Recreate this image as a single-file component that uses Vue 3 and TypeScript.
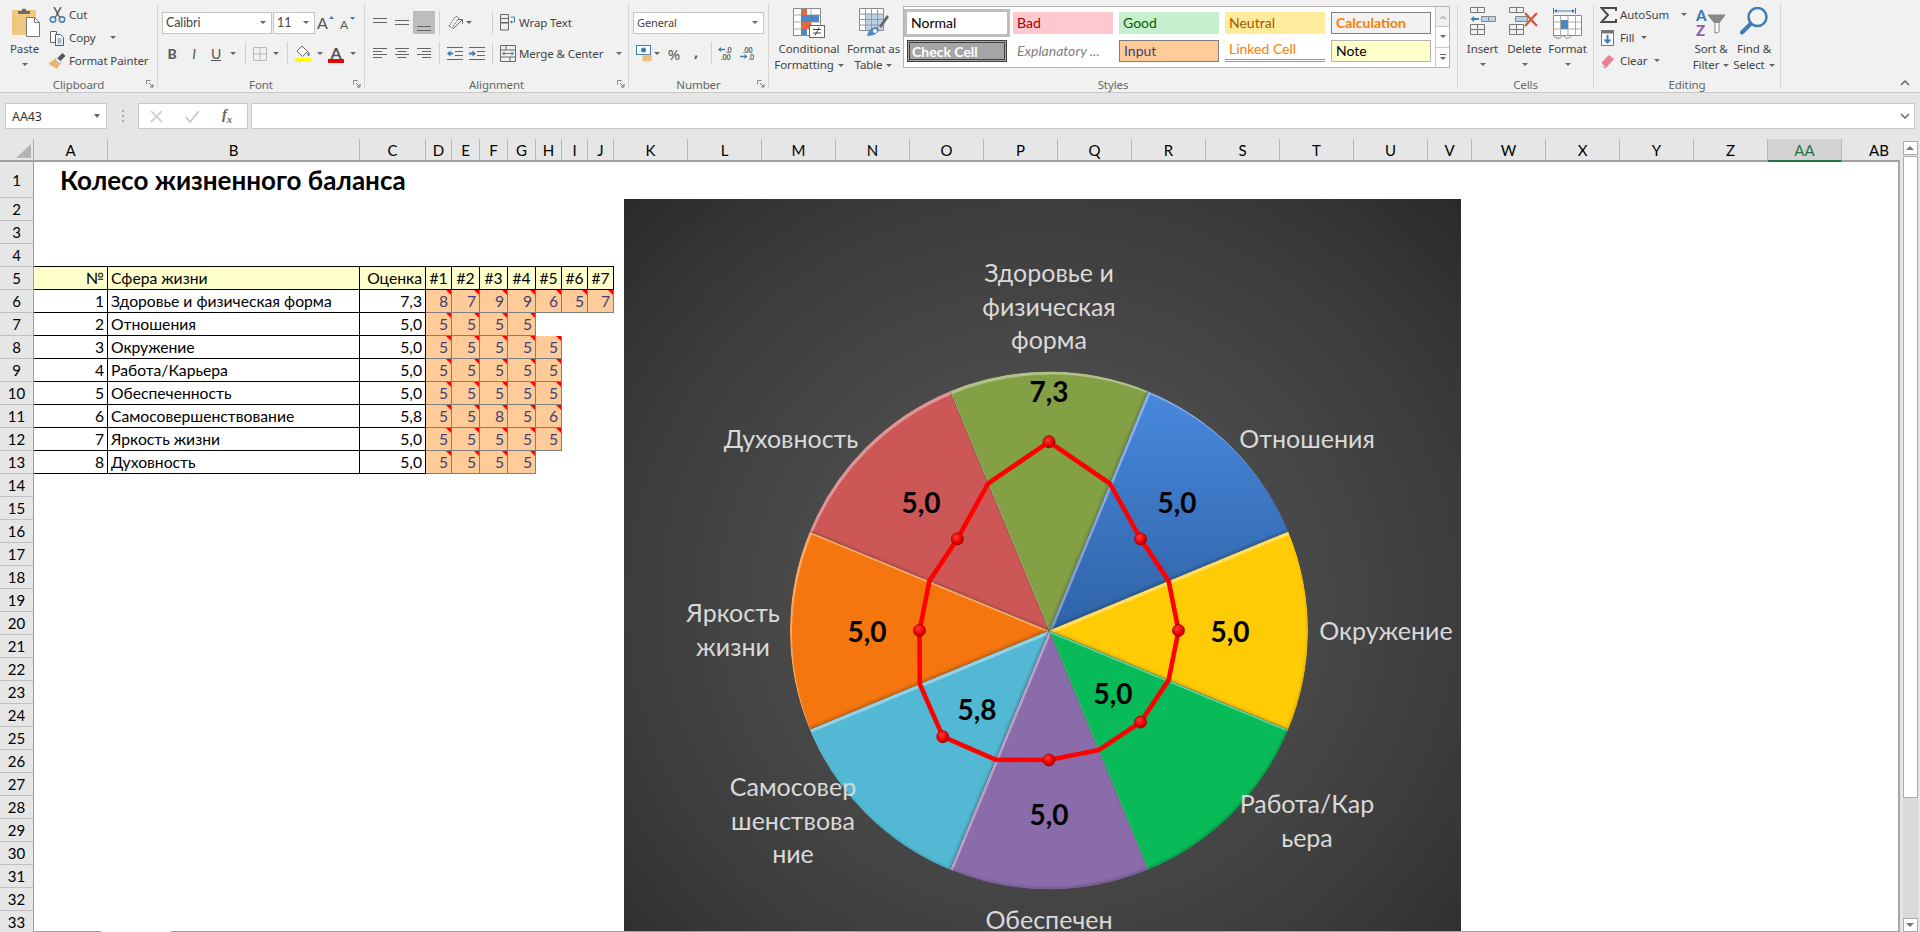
<script setup lang="ts">
interface Col { name: string; w: number }
const colWidths: [string, number][] = [
  ['A', 74], ['B', 252], ['C', 66], ['D', 26], ['E', 28], ['F', 28], ['G', 28], ['H', 26], ['I', 26], ['J', 26],
  ['K', 74], ['L', 74], ['M', 74], ['N', 74], ['O', 74], ['P', 74], ['Q', 74], ['R', 74], ['S', 74], ['T', 74], ['U', 74],
  ['V', 44], ['W', 74], ['X', 74], ['Y', 74], ['Z', 74], ['AA', 74], ['AB', 74],
]
const cols: Col[] = colWidths.map(([name, w]) => ({ name, w }))
const scoreCols = cols.slice(3, 10)
const rowNums = Array.from({ length: 33 }, (_, i) => i + 1)

interface Sphere { name: string; scores: number[]; color: string; lines: string[]; lx: number; ly: number; vx: number; vy: number }
const spheres: Sphere[] = [
  { name: 'Здоровье и физическая форма', scores: [8, 7, 9, 9, 6, 5, 7], color: '#84a044', lines: ['Здоровье и', 'физическая', 'форма'], lx: 425, ly: 73, vx: 425, vy: 192 },
  { name: 'Отношения', scores: [5, 5, 5, 5], color: 'url(#blueFill)', lines: ['Отношения'], lx: 683, ly: 239, vx: 553, vy: 303 },
  { name: 'Окружение', scores: [5, 5, 5, 5, 5], color: '#ffcb05', lines: ['Окружение'], lx: 762, ly: 431, vx: 606, vy: 432 },
  { name: 'Работа/Карьера', scores: [5, 5, 5, 5, 5], color: '#08bb58', lines: ['Работа/Кар', 'ьера'], lx: 683, ly: 604, vx: 489, vy: 494 },
  { name: 'Обеспеченность', scores: [5, 5, 5, 5, 5], color: '#8a6cab', lines: ['Обеспечен'], lx: 425, ly: 720, vx: 425, vy: 615 },
  { name: 'Самосовершенствование', scores: [5, 5, 8, 5, 6], color: '#52b8d3', lines: ['Самосовер', 'шенствова', 'ние'], lx: 169, ly: 587, vx: 353, vy: 510 },
  { name: 'Яркость жизни', scores: [5, 5, 5, 5, 5], color: '#f5760f', lines: ['Яркость', 'жизни'], lx: 109, ly: 413, vx: 243, vy: 432 },
  { name: 'Духовность', scores: [5, 5, 5, 5], color: '#cd5757', lines: ['Духовность'], lx: 167, ly: 239, vx: 297, vy: 303 },
]
const avg = (a: number[]): number => a.reduce((s, v) => s + v, 0) / a.length
const fmt = (v: number): string => v.toFixed(1).replace('.', ',')

const CX = 425
const CY = 431.5
const R = 259
const pt = (deg: number, r: number): [number, number] => {
  const a = ((deg - 90) * Math.PI) / 180
  return [CX + r * Math.cos(a), CY + r * Math.sin(a)]
}
const sectors = spheres.map((s, i) => {
  const [x1, y1] = pt(i * 45 - 22.5, R)
  const [x2, y2] = pt(i * 45 + 22.5, R)
  return { color: s.color, d: `M${CX} ${CY}L${x1.toFixed(1)} ${y1.toFixed(1)}A${R} ${R} 0 0 1 ${x2.toFixed(1)} ${y2.toFixed(1)}Z` }
})
const averages = spheres.map((s) => avg(s.scores))
const radarPts: string[] = []
averages.forEach((v, i) => {
  const next = averages[(i + 1) % 8]
  radarPts.push(pt(i * 45, (v / 10) * R).map((n) => n.toFixed(1)).join(','))
  radarPts.push(pt(i * 45 + 22.5, (((v + next) / 2) / 10) * R).map((n) => n.toFixed(1)).join(','))
})
const markers = averages.map((v, i) => pt(i * 45, (v / 10) * R))
const LINE = 33.5
</script>

<template>
  <div class="app">
    <header class="ribbon">
      <!-- Clipboard -->
      <section class="group g-clip">
        <div class="group-body clip-body">
          <div class="big b-paste">
            <div class="big-icon">
              <svg class="paste-ico" width="30" height="31" viewBox="0 0 30 31"><rect x="0" y="3" width="24" height="25" rx="1" fill="#efc77f"/><path d="M6 7V4h3.500a2.500 2.500 0 0 1 5 0H18v3z" fill="#6d6d6d"/><path d="M14.500 10.500h8l5 5v14h-13z" fill="#fff" stroke="#777"/><path d="M22.500 10.500v5h5" fill="none" stroke="#777"/></svg>
            </div>
            <span>Paste</span>
            <i class="caret"></i>
          </div>
          <div class="small-col">
            <div class="small">
              <svg width="17" height="16" viewBox="0 0 17 16"><path d="M5 0l4.500 8M12 0L7.500 8" stroke="#666" stroke-width="1.600" fill="none"/><circle cx="4" cy="12.500" r="2.700" fill="none" stroke="#3e7cb8" stroke-width="1.500"/><circle cx="13" cy="12.500" r="2.700" fill="none" stroke="#3e7cb8" stroke-width="1.500"/><path d="M9 8l2.500 3M8 8l-2.500 3" stroke="#666" stroke-width="1.200"/></svg>
              <span>Cut</span>
            </div>
            <div class="small">
              <svg width="17" height="16" viewBox="0 0 17 16"><path d="M1.500 1.500h6v11h-6z" fill="#fff" stroke="#666"/><path d="M6.500 4.500h5l3 3v8h-8z" fill="#fff" stroke="#555"/><path d="M8.500 9h4M8.500 11h4M8.500 13h4" stroke="#3e7cb8"/></svg>
              <span>Copy</span><i class="caret cap"></i>
            </div>
            <div class="small">
              <svg width="17" height="16" viewBox="0 0 17 16"><path d="M0 10l6-4 5 5-3 5-2-2-1 1-1-2-2 0z" fill="#e8b76c"/><path d="M6 6l5 5 1-2-4-4z" fill="#fff" stroke="#888" stroke-width=".5"/><path d="M8.500 5l5-5 3 3-5 5z" fill="#555"/></svg>
              <span>Format Painter</span>
            </div>
          </div>
        </div>
        <div class="group-label"><b></b><span>Clipboard</span><svg class="launch" width="8" height="8" viewBox="0 0 8 8"><path d="M.5.500h4M.5.500v4" stroke="#888" fill="none"/><path d="M3 3l4 4M7 4v3H4" stroke="#777" fill="none"/></svg></div>
      </section>

      <!-- Font -->
      <section class="group g-font">
        <div class="group-body two-rows">
          <div class="row pl4">
            <div class="select w110"><span class="cal">Calibri</span><i class="caret"></i></div>
            <div class="select w42 ml1"><span class="cal">11</span><i class="caret"></i></div>
            <div class="tbtn">
              <svg width="20" height="20" viewBox="0 0 20 20"><text x="1" y="16" class="ico-n" font-size="16">A</text><path d="M13 6l2.500-3L18 6z" fill="#3e7cb8"/></svg>
            </div>
            <div class="tbtn">
              <svg width="20" height="20" viewBox="0 0 20 20"><text x="2" y="16" class="ico-n" font-size="12">A</text><path d="M12 4h5l-2.500 3z" fill="#3e7cb8"/></svg>
            </div>
          </div>
          <div class="row pl3">
            <div class="tbtn letter"><b>B</b></div>
            <div class="tbtn letter"><em>I</em></div>
            <div class="tbtn letter"><u>U</u></div>
            <div class="cbox"><i class="caret"></i></div>
            <i class="vsep ml6"></i>
            <div class="tbtn ml2 w23">
              <svg width="14" height="14" viewBox="0 0 14 14"><path d="M.5.500h13v13H.5z" fill="none" stroke="#888" stroke-dasharray="1 1"/><path d="M7 .5v13M.5 7h13" stroke="#888" stroke-dasharray="1 1"/></svg>
            </div>
            <div class="cbox w10"><i class="caret"></i></div>
            <i class="vsep ml6"></i>
            <div class="tbtn ml6 w19">
              <svg width="17" height="17" viewBox="0 0 17 17"><path d="M7 1l5.500 5.500-5 5L2 6z" fill="#fff" stroke="#666"/><path d="M13 6c1.500 2 2 3.500 1.500 4.500S12 11 12.500 9z" fill="#3e7cb8"/><rect x="0" y="13" width="16" height="4" fill="#ffff00"/></svg>
            </div>
            <div class="cbox ml1"><i class="caret"></i></div>
            <div class="tbtn w20">
              <svg width="17" height="24" viewBox="0 0 17 24"><text x="2.500" y="17" class="ico-t" font-size="16">A</text><rect x="0" y="17" width="16" height="4" fill="#f00000"/></svg>
            </div>
            <div class="cbox w13"><i class="caret"></i></div>
          </div>
        </div>
        <div class="group-label"><b></b><span>Font</span><svg class="launch" width="8" height="8" viewBox="0 0 8 8"><path d="M.5.500h4M.5.500v4" stroke="#888" fill="none"/><path d="M3 3l4 4M7 4v3H4" stroke="#777" fill="none"/></svg></div>
      </section>

      <!-- Alignment -->
      <section class="group g-align">
        <div class="group-body two-rows">
          <div class="row pl4">
            <div class="tbtn"><svg width="14" height="9" viewBox="0 0 14 9"><path d="M0 .5h14M0 4.500h14" stroke="#666"/></svg></div>
            <div class="tbtn"><svg width="14" height="9" viewBox="0 0 14 9"><path d="M0 2.500h14M0 6.500h14" stroke="#666"/></svg></div>
            <div class="tbtn active"><svg width="14" height="22" viewBox="0 0 14 22"><path d="M0 14.500h14M0 18.500h14" stroke="#666"/></svg></div>
            <i class="vsep ml4"></i>
            <div class="tbtn ml4"><svg width="17" height="17" viewBox="0 0 17 17"><path d="M2 12L9 2l3 2-7 10z" fill="none" stroke="#666" stroke-dasharray="2 1"/><path d="M6 15L15 6" stroke="#666"/><path d="M11 5.500h4.500V10" fill="none" stroke="#666"/></svg></div>
            <div class="cbox w6"><i class="caret"></i></div>
            <span class="w16"></span>
            <i class="vsep ml4"></i>
            <div class="small wrap">
              <svg width="16" height="17" viewBox="0 0 16 17"><path d="M.5.500h8v4h-8zM.5 4.500h8v4h-8z" fill="none" stroke="#666"/><path d="M.5 9h8v7h-8z" fill="none" stroke="#666"/><path d="M11 3h3.500v5H10" fill="none" stroke="#3e7cb8"/><path d="M10 8l2-1.500v3z" fill="#3e7cb8"/></svg>
              <span>Wrap Text</span>
            </div>
          </div>
          <div class="row pl4">
            <div class="tbtn"><svg width="14" height="11" viewBox="0 0 14 11"><path d="M0 .5h14M0 3.500h9M0 6.500h14M0 9.500h9" stroke="#666"/></svg></div>
            <div class="tbtn"><svg width="14" height="11" viewBox="0 0 14 11"><path d="M0 .5h14M2.500 3.500h9M0 6.500h14M2.500 9.500h9" stroke="#666"/></svg></div>
            <div class="tbtn"><svg width="14" height="11" viewBox="0 0 14 11"><path d="M0 .5h14M5 3.500h9M0 6.500h14M5 9.500h9" stroke="#666"/></svg></div>
            <i class="vsep ml4"></i>
            <div class="tbtn ml4"><svg width="16" height="13" viewBox="0 0 16 13"><path d="M0 .5h16M8 4.500h8M8 8.500h8M0 12.500h16" stroke="#666"/><path d="M6 6.500H1" stroke="#3e7cb8" stroke-width="2"/><path d="M0 6.500l3.500-3v6z" fill="#3e7cb8"/></svg></div>
            <div class="tbtn"><svg width="16" height="13" viewBox="0 0 16 13"><path d="M0 .5h16M8 4.500h8M8 8.500h8M0 12.500h16" stroke="#666"/><path d="M0 6.500h5" stroke="#3e7cb8" stroke-width="2"/><path d="M7 6.500l-3.500-3v6z" fill="#3e7cb8"/></svg></div>
            <i class="vsep ml4"></i>
            <div class="small wrap">
              <svg width="16" height="17" viewBox="0 0 16 17"><path d="M.5.500h15v16H.5z" fill="none" stroke="#666"/><path d="M.5 5h15M.5 12h15M6 .5V5M10 12v4.500" stroke="#666"/><path d="M3 8.500h10" stroke="#3e7cb8"/><path d="M2 8.500l2.500-2v4zM14 8.500l-2.500-2v4z" fill="#3e7cb8"/></svg>
              <span>Merge &amp; Center</span><i class="caret mcap"></i>
            </div>
          </div>
        </div>
        <div class="group-label"><b></b><span>Alignment</span><svg class="launch" width="8" height="8" viewBox="0 0 8 8"><path d="M.5.500h4M.5.500v4" stroke="#888" fill="none"/><path d="M3 3l4 4M7 4v3H4" stroke="#777" fill="none"/></svg></div>
      </section>

      <!-- Number -->
      <section class="group g-num">
        <div class="group-body two-rows">
          <div class="row pl4">
            <div class="select w131"><span class="seg">General</span><i class="caret"></i></div>
          </div>
          <div class="row pl7">
            <svg width="17" height="17" viewBox="0 0 17 17"><rect x=".5" y=".5" width="14" height="9" fill="#fff" stroke="#3e7cb8"/><circle cx="7.500" cy="5" r="2.500" fill="#3e7cb8"/><ellipse cx="11" cy="11.500" rx="5" ry="2" fill="#eec27a"/><ellipse cx="11" cy="14.500" rx="5" ry="2" fill="#eec27a"/></svg>
            <div class="cbox w8"><i class="caret"></i></div>
            <div class="tbtn pct ml2">%</div>
            <div class="tbtn comma">,</div>
            <i class="vsep ml4"></i>
            <div class="tbtn ml4">
              <svg width="18" height="17" viewBox="0 0 18 17"><path d="M7 4.500H1" stroke="#3e7cb8" stroke-width="1.500"/><path d="M0 4.500l3-2.500v5z" fill="#3e7cb8"/><text x="8" y="8" class="ico-t" font-size="7">.0</text><text x="3" y="15" class="ico-t" font-size="7">.00</text></svg>
            </div>
            <div class="tbtn">
              <svg width="18" height="17" viewBox="0 0 18 17"><text x="3" y="8" class="ico-t" font-size="7">.00</text><path d="M0 11.500h6" stroke="#3e7cb8" stroke-width="1.500"/><path d="M7.500 11.500l-3-2.500v5z" fill="#3e7cb8"/><text x="8.500" y="15" class="ico-t" font-size="7">.0</text></svg>
            </div>
          </div>
        </div>
        <div class="group-label"><b></b><span>Number</span><svg class="launch" width="8" height="8" viewBox="0 0 8 8"><path d="M.5.500h4M.5.500v4" stroke="#888" fill="none"/><path d="M3 3l4 4M7 4v3H4" stroke="#777" fill="none"/></svg></div>
      </section>

      <!-- Styles -->
      <section class="group g-styles">
        <div class="group-body styles-body">
          <div class="big b-cf">
            <div class="big-icon">
              <svg width="32" height="31" viewBox="0 0 32 31"><path d="M.5 1.500h27v27H.5z" fill="#fff" stroke="#888"/><path d="M9 1.500v27M18 1.500v27M.5 8h27M.5 15h27M.5 22h27" stroke="#aaa"/><rect x="8" y="2" width="6" height="6" fill="#dd6b45"/><rect x="8" y="8" width="18" height="7" fill="#4f86c4"/><rect x="8" y="15" width="10" height="7" fill="#dd6b45"/><rect x="8" y="22" width="6" height="6" fill="#4f86c4"/><rect x="16.500" y="18.500" width="15" height="12" fill="#fff" stroke="#666"/><path d="M20 22.500h8M20 26h8M26 20.500l-4 8" stroke="#444" fill="none"/></svg>
            </div>
            <span>Conditional</span>
            <span>Formatting<i class="caret cap2"></i></span>
          </div>
          <div class="big b-ft">
            <div class="big-icon">
              <svg width="30" height="30" viewBox="0 0 30 30"><path d="M.5 1.500h24v22H.5z" fill="#fff" stroke="#888"/><rect x="6" y="7" width="18" height="16" fill="#bcd0e6"/><path d="M6.500 1.500v22M12.500 1.500v22M18.500 1.500v22M.5 7h24M.5 12.500h24M.5 18h24" stroke="#999"/><path d="M20 19L28 8l2 2-8 11z" fill="#666"/><path d="M8 29c1-5 4-8 8-9 3 0 5 2 3 5-3 3-7 4-11 4z" fill="#4f86c4"/><circle cx="16" cy="24" r="2" fill="#fff"/></svg>
            </div>
            <span>Format as</span>
            <span>Table<i class="caret cap2"></i></span>
          </div>
          <div class="gallery">
            <div class="gal-grid">
              <div class="st st-normal">Normal</div>
              <div class="st st-bad">Bad</div>
              <div class="st st-good">Good</div>
              <div class="st st-neutral">Neutral</div>
              <div class="st st-calc">Calculation</div>
              <div class="st st-check">Check Cell</div>
              <div class="st st-expl">Explanatory ...</div>
              <div class="st st-input">Input</div>
              <div class="st st-linked">Linked Cell</div>
              <div class="st st-note">Note</div>
            </div>
            <div class="gal-scroll">
              <div class="gs off"><i class="tri-up"></i></div>
              <div class="gs"><i class="caret"></i></div>
              <div class="gs"><i class="dash"></i><i class="caret"></i></div>
            </div>
          </div>
        </div>
        <div class="group-label"><b></b><span>Styles</span><b></b></div>
      </section>

      <!-- Cells -->
      <section class="group g-cells">
        <div class="group-body cells-body">
          <div class="big b-ins">
            <div class="big-icon">
              <svg width="26" height="28" viewBox="0 0 26 28"><path d="M.5.500h14v5H.5zM7.500.5v5M.5 17.500h14v10H.5zM.5 22.500h14M7.500 17.500v10" fill="none" stroke="#777"/><path d="M11.500 9.500h14v5h-14zM18.500 9.500v5" fill="#bcd0e6" stroke="#888"/><path d="M3 12h6" stroke="#3e7cb8" stroke-width="2"/><path d="M.5 12l3.500-3v6z" fill="#3e7cb8"/></svg>
            </div>
            <span>Insert</span>
            <i class="caret"></i>
          </div>
          <div class="big b-del">
            <div class="big-icon">
              <svg width="31" height="28" viewBox="0 0 31 28"><path d="M.5.500h14v5H.5zM7.500.5v5M.5 17.500h14v10H.5zM.5 22.500h14M7.500 17.500v10" fill="none" stroke="#777"/><path d="M6.500 9.500h12v5h-12z" fill="#bcd0e6" stroke="#888"/><path d="M16 6l12 13M28 6L16 19" stroke="#d6583a" stroke-width="2.400"/></svg>
            </div>
            <span>Delete</span>
            <i class="caret"></i>
          </div>
          <div class="big b-fmt">
            <div class="big-icon">
              <svg width="30" height="34" viewBox="0 0 30 34"><path d="M.5 1v6M22.500 1v6M2 4h19" stroke="#3e7cb8"/><path d="M1 4l3-2v4zM22 4l-3-2v4z" fill="#3e7cb8"/><path d="M.5 8.500h28v20H.5z" fill="#fff" stroke="#888"/><path d="M7.500 8.500v20M15 8.500v20M22.500 8.500v20M.5 15h28M.5 22h28" stroke="#aaa"/><rect x="8" y="13" width="7" height="9" fill="#4f86c4"/><path d="M1 29c2 3 6 3 8 0M11 29c2 3 5 3 7 0" fill="none" stroke="#888"/></svg>
            </div>
            <span>Format</span>
            <i class="caret"></i>
          </div>
        </div>
        <div class="group-label"><b></b><span>Cells</span><b></b></div>
      </section>

      <!-- Editing -->
      <section class="group g-edit">
        <div class="group-body editing-body">
          <div class="small-col edit-col">
            <div class="small">
              <svg width="17" height="16" viewBox="0 0 17 16"><path d="M16 4V1H1.500L8 8l-6.500 7H16v-3" fill="none" stroke="#4a4a4a" stroke-width="2"/></svg>
              <span>AutoSum</span><i class="caret cap3"></i>
            </div>
            <div class="small">
              <svg width="17" height="16" viewBox="0 0 17 16"><rect x="1" y="0" width="13" height="3" fill="#777"/><rect x="1.500" y="3" width="12" height="12.500" fill="#fff" stroke="#777"/><path d="M7.500 5v7" stroke="#3e7cb8" stroke-width="2"/><path d="M3.500 9.500h8l-4 4.500z" fill="#3e7cb8"/></svg>
              <span>Fill</span><i class="caret cap2"></i>
            </div>
            <div class="small">
              <svg width="17" height="16" viewBox="0 0 17 16"><path d="M1 10l8-8 5 4-8 9H4z" fill="#e7808f"/><path d="M1 10l4 4" stroke="#fff"/></svg>
              <span>Clear</span><i class="caret cap2"></i>
            </div>
          </div>
          <div class="big b-sort">
            <div class="big-icon">
              <svg width="30" height="31" viewBox="0 0 30 31"><text x="0" y="14" class="az" fill="#3e7cb8">A</text><text x="0" y="29" class="az" fill="#8b5fb0">Z</text><path d="M12 8h17l-6 8v9l-4 1V16z" fill="#fff" stroke="#888"/><path d="M12 8h17l-6 8h-5z" fill="#888"/></svg>
            </div>
            <span>Sort &amp;</span>
            <span>Filter<i class="caret cap2"></i></span>
          </div>
          <div class="big b-find">
            <div class="big-icon">
              <svg width="28" height="28" viewBox="0 0 28 28"><circle cx="17.500" cy="10" r="9" fill="#fff" fill-opacity=".2" stroke="#3e7cb8" stroke-width="2.500"/><path d="M10.500 17L2 25.500" stroke="#3e7cb8" stroke-width="4" stroke-linecap="round"/></svg>
            </div>
            <span>Find &amp;</span>
            <span>Select<i class="caret cap2"></i></span>
          </div>
        </div>
        <div class="group-label"><b></b><span>Editing</span><b></b></div>
      </section>

      <div class="collapse">
        <svg width="10" height="7" viewBox="0 0 10 7"><path d="M1 6l4-4 4 4" fill="none" stroke="#666" stroke-width="1.500"/></svg>
      </div>
    </header>

    <div class="formula">
      <div class="namebox"><span>AA43</span><i class="caret big-caret"></i></div>
      <div class="dots"><i></i><i></i><i></i></div>
      <div class="fxbox">
        <svg width="13" height="13" viewBox="0 0 13 13"><path d="M1 1l11 11M12 1L1 12" stroke="#c8c8c8" stroke-width="1.600"/></svg>
        <svg width="15" height="13" viewBox="0 0 15 13"><path d="M1 7l4 5 9-11" fill="none" stroke="#c8c8c8" stroke-width="1.800"/></svg>
        <span class="fx">f<sub>x</sub></span>
      </div>
      <div class="finput"><svg width="10" height="7" viewBox="0 0 10 7"><path d="M1 1l4 4 4-4" fill="none" stroke="#666" stroke-width="1.500"/></svg></div>
    </div>

    <div class="sheet-wrap">
      <main class="sheet">
        <div class="col-head">
          <div class="corner"><svg width="16" height="15" viewBox="0 0 16 15"><path d="M15 0v14H0z" fill="#b4b4b4"/></svg></div>
          <div v-for="c in cols" :key="c.name" class="col" :class="{ sel: c.name === 'AA' }" :style="{ width: c.w + 'px' }">{{ c.name }}</div>
        </div>
        <div class="sheet-body">
          <div class="row-heads">
            <div v-for="n in rowNums" :key="n" class="rh" :class="{ first: n === 1 }">{{ n }}</div>
          </div>
          <div class="cells">
            <div class="title">Колесо жизненного баланса</div>
            <div class="tbl">
              <div class="tr head">
                <div class="td r c-a">№</div>
                <div class="td c-b">Сфера жизни</div>
                <div class="td r c-c">Оценка</div>
                <div v-for="(c, i) in scoreCols" :key="c.name" class="td ctr" :style="{ width: c.w + 'px' }">#{{ i + 1 }}</div>
              </div>
              <div v-for="(s, i) in spheres" :key="s.name" class="tr">
                <div class="td r c-a">{{ i + 1 }}</div>
                <div class="td c-b">{{ s.name }}</div>
                <div class="td r c-c">{{ fmt(avg(s.scores)) }}</div>
                <div v-for="(v, j) in s.scores" :key="j" class="td inp" :style="{ width: scoreCols[j].w + 'px' }">{{ v }}</div>
              </div>
            </div>
          </div>
          <figure class="chart">
            <svg width="837" height="732" viewBox="0 0 837 732">
              <defs>
                <linearGradient id="blueFill" x1="0" y1="0" x2="0" y2="1">
                  <stop offset="0" stop-color="#4888de"/>
                  <stop offset="1" stop-color="#2f63a6"/>
                </linearGradient>
                <radialGradient id="ball" cx=".4" cy=".35" r=".7">
                  <stop offset="0" stop-color="#ff3b3b"/>
                  <stop offset=".6" stop-color="#ee0000"/>
                  <stop offset="1" stop-color="#a80000"/>
                </radialGradient>
                <filter id="bevel" x="-5%" y="-5%" width="110%" height="110%" color-interpolation-filters="sRGB">
                  <feOffset in="SourceAlpha" dx="1.600" dy="3" result="o1"/>
                  <feComposite in="SourceAlpha" in2="o1" operator="out" result="e1"/>
                  <feGaussianBlur in="e1" stdDeviation=".7" result="b1"/>
                  <feFlood flood-color="#fff" flood-opacity=".36"/>
                  <feComposite in2="b1" operator="in" result="hl"/>
                  <feOffset in="SourceAlpha" dx="-1.200" dy="-2" result="o2"/>
                  <feComposite in="SourceAlpha" in2="o2" operator="out" result="e2"/>
                  <feGaussianBlur in="e2" stdDeviation=".8" result="b2"/>
                  <feFlood flood-color="#000" flood-opacity=".2"/>
                  <feComposite in2="b2" operator="in" result="sh"/>
                  <feMerge result="m"><feMergeNode in="SourceGraphic"/><feMergeNode in="hl"/><feMergeNode in="sh"/></feMerge>
                  <feComposite in="m" in2="SourceAlpha" operator="in"/>
                </filter>
              </defs>
              <path v-for="(s, i) in sectors" :key="i" :d="s.d" :fill="s.color" filter="url(#bevel)"/>
              <g v-for="(s, i) in spheres" :key="'l' + i">
                <text v-for="(t, k) in s.lines" :key="k" class="cat" :x="s.lx" :y="s.ly + k * LINE" text-anchor="middle" dominant-baseline="central">{{ t }}</text>
                <text class="val" :x="s.vx" :y="s.vy" text-anchor="middle" dominant-baseline="central">{{ fmt(averages[i]) }}</text>
              </g>
              <polygon :points="radarPts.join(' ')" fill="none" stroke="#ff0000" stroke-width="4.600" stroke-linejoin="round"/>
              <circle v-for="(m, i) in markers" :key="'m' + i" :cx="m[0]" :cy="m[1]" r="6" fill="url(#ball)" stroke="#9c0000" stroke-width=".8"/>
            </svg>
          </figure>
        </div>
      </main>
      <aside class="vscroll">
        <div class="vbtn"><i class="tri-up dark"></i></div>
        <div class="thumb"></div>
        <div class="track"></div>
        <div class="vbtn"><i class="caret dark"></i></div>
      </aside>
    </div>
  </div>
</template>

<style>
html, body { margin: 0; padding: 0; background: #fff; overflow: hidden; }
</style>

<style scoped>
.app { width: 1920px; height: 932px; overflow: hidden; display: flex; flex-direction: column; font-family: "Noto Sans", "Open Sans", sans-serif; color: #444; font-size: 11.5px; letter-spacing: -.1px; }
i { font-style: normal; display: block; }
svg { display: block; flex: none; }

.ribbon { height: 93px; box-sizing: border-box; background: #f1f1f1; border-bottom: 1px solid #c9c9c9; display: flex; flex: none; }
.group { height: 84px; margin-top: 4px; box-sizing: border-box; border-right: 1px solid #d6d6d6; display: flex; flex-direction: column; flex: none; }
.g-clip { width: 158px; }
.g-font { width: 207px; }
.g-align { width: 264px; }
.g-num { width: 140px; }
.g-styles { width: 689px; }
.g-cells { width: 136px; }
.g-edit { width: 187px; }
.group-body { flex: none; height: 75px; margin-top: -4px; }
.group-label { flex: none; height: 18px; display: grid; grid-template-columns: 1fr auto 1fr; align-items: center; color: #666; }
.group-label span { text-align: center; }
.launch { justify-self: end; margin-right: 3px; }

.big { display: flex; flex-direction: column; align-items: center; padding-top: 5px; flex: none; line-height: 16px; white-space: nowrap; box-sizing: border-box; }
.big-icon { height: 36px; flex: none; width: 100%; display: flex; justify-content: center; align-items: flex-start; padding-top: 2px; box-sizing: border-box; }
.big > .caret { margin-top: 6px; }
.b-paste { width: 49px; }
.paste-ico { margin-left: 5px; }
.b-cf { width: 74px; margin-left: 3px; }
.b-ft { width: 55px; }
.b-ins { width: 43px; }
.b-del { width: 41px; }
.b-fmt { width: 45px; }
.b-sort { width: 42px; }
.b-find { width: 44px; }
.caret { width: 0; height: 0; border-left: 3px solid transparent; border-right: 3px solid transparent; border-top: 3px solid #666; flex: none; }
.tri-up { width: 0; height: 0; border-left: 4px solid transparent; border-right: 4px solid transparent; border-bottom: 4px solid #c4c4c4; }
.tri-up.dark { border-bottom-color: #777; }
.caret.dark { border-left-width: 4px; border-right-width: 4px; border-top: 4px solid #777; }
.big span .caret { display: inline-block; vertical-align: middle; margin-left: 4px; }

.clip-body { display: flex; }
.small-col { padding-top: 3px; display: flex; flex-direction: column; }
.small { height: 23px; display: flex; align-items: center; gap: 3px; white-space: nowrap; }
.cap { margin-left: 11px; }
.cap2 { margin-left: 4px; }
.cap3 { margin-left: 9px; }
.mcap { margin-left: 10px; }

.two-rows { display: flex; flex-direction: column; padding-top: 11px; gap: 8px; box-sizing: border-box; }
.row { display: flex; align-items: center; height: 23px; }
.pl3 { padding-left: 3px; }
.pl4 { padding-left: 4px; }
.pl7 { padding-left: 7px; }
.ml1 { margin-left: 1px; }
.ml2 { margin-left: 2px; }
.ml4 { margin-left: 4px; }
.ml6 { margin-left: 6px; }
.select { height: 22px; box-sizing: border-box; background: #fff; border: 1px solid #c4c4c4; display: flex; align-items: center; justify-content: space-between; padding: 0 5px 0 3px; }
.w110 { width: 110px; }
.w42 { width: 42px; }
.w131 { width: 131px; }
.cal { font-family: Lato, sans-serif; font-size: 12.5px; color: #444; }
.seg { font-size: 11px; }
.tbtn { width: 22px; height: 23px; display: flex; align-items: center; justify-content: center; flex: none; }
.tbtn.active { background: #bdbdbd; }
.tbtn.w19 { width: 19px; }
.tbtn.w20 { width: 20px; }
.tbtn.w23 { width: 23px; }
.cbox { width: 12px; display: flex; justify-content: center; flex: none; }
.cbox.w6 { width: 6px; }
.cbox.w8 { width: 8px; }
.cbox.w10 { width: 10px; }
.cbox.w13 { width: 13px; }
.w16 { width: 16px; flex: none; }
.vsep { width: 1px; height: 23px; background: #d0d0d0; flex: none; }
.letter { font-family: Lato, sans-serif; font-size: 14px; color: #555; }
.ico-t { font-family: Lato, sans-serif; fill: #555; font-weight: 700; }
.ico-n { font-family: Lato, sans-serif; fill: #555; font-weight: 400; }
.wrap { margin-left: 7px; }
.pct { font-size: 15px; color: #555; }
.comma { font-size: 15px; font-weight: 700; color: #555; padding-bottom: 5px; box-sizing: border-box; }

.styles-body { display: flex; }
.gallery { margin: 6px 0 0 2px; height: 62px; width: 547px; box-sizing: border-box; background: #fff; border: 1px solid #b5b5b5; display: flex; }
.gal-grid { margin: 5px 0 0 3px; display: grid; grid-template-columns: repeat(5, 100px); grid-template-rows: 22px 22px; gap: 6px; font-family: Lato, sans-serif; font-size: 14px; color: #000; letter-spacing: 0; }
.st { box-sizing: border-box; display: flex; align-items: center; padding: 0 0 2px 4px; white-space: nowrap; }
.st-normal { outline: 3px solid #bebebe; }
.st-bad { background: #ffc7ce; color: #9c0006; }
.st-good { background: #c6efce; color: #006100; }
.st-neutral { background: #ffeb9c; color: #9c5700; }
.st-calc { background: #f2f2f2; color: #fa7d00; font-weight: 700; border: 1px solid #7f7f7f; }
.st-check { background: #a5a5a5; color: #fff; font-weight: 700; border: 3px double #3f3f3f; padding: 0 0 0 2px; }
.st-expl { color: #7f7f7f; font-style: italic; }
.st-input { background: #ffcc99; color: #3f3f76; border: 1px solid #7f7f7f; }
.st-linked { color: #fa7d00; border-bottom: 3px double #ff8001; }
.st-note { background: #ffffcc; border: 1px solid #b2b2b2; }
.gal-scroll { margin-left: 4px; width: 14px; border-left: 1px solid #c6c6c6; display: flex; flex-direction: column; }
.gs { flex: 1; display: flex; flex-direction: column; gap: 2px; align-items: center; justify-content: center; border-bottom: 1px solid #c6c6c6; }
.gs:last-child { border-bottom: 0; }
.gs.off { background: #f0f0f0; }
.dash { width: 6px; height: 1px; background: #666; }

.cells-body { display: flex; padding-left: 3px; }

.editing-body { display: flex; padding-left: 3px; }
.edit-col { width: 93px; padding-left: 3px; box-sizing: border-box; flex: none; }
.az { font-family: Lato, sans-serif; font-weight: 900; font-size: 15px; }

.collapse { margin-left: auto; margin-right: 10px; align-self: flex-end; padding-bottom: 6px; }

.formula { height: 46px; flex: none; box-sizing: border-box; background: #e6e6e6; padding: 10px 5px 10px 5px; display: flex; }
.namebox { width: 102px; box-sizing: border-box; background: #fff; border: 1px solid #c8c8c8; display: flex; align-items: center; justify-content: space-between; padding: 0 6px; font-size: 12.5px; color: #333; }
.big-caret { border-left-width: 3.5px; border-right-width: 3.5px; border-top-width: 4px; }
.dots { width: 31px; display: flex; flex-direction: column; align-items: center; justify-content: center; gap: 3px; }
.dots i { width: 2px; height: 2px; background: #aaa; }
.fxbox { width: 110px; box-sizing: border-box; background: #fff; border: 1px solid #c8c8c8; display: flex; align-items: center; padding-left: 11px; gap: 22px; }
.fx { font-family: "Liberation Serif", serif; font-style: italic; font-weight: 700; font-size: 15px; color: #666; line-height: 1; }
.fx sub { font-size: 10px; }
.finput { margin-left: 3px; flex: 1; background: #fff; border: 1px solid #c8c8c8; display: flex; justify-content: flex-end; align-items: center; padding-right: 4px; }

.sheet-wrap { flex: 1; min-height: 0; display: flex; }
.sheet { width: 1900px; flex: none; display: flex; flex-direction: column; font-family: Lato, sans-serif; font-size: 15.7px; color: #000; letter-spacing: 0; }
.col-head { height: 23px; flex: none; display: flex; background: #e6e6e6; box-sizing: border-box; overflow: hidden; }
.corner { width: 34px; flex: none; box-sizing: border-box; border-right: 1px solid #b0b0b0; border-bottom: 2px solid #a0a0a0; display: flex; justify-content: flex-end; align-items: flex-end; padding: 0 1px 1px 0; }
.col { flex: none; box-sizing: border-box; border-right: 1px solid #b8b8b8; border-bottom: 2px solid #a0a0a0; display: flex; align-items: center; justify-content: center; font-size: 15px; }
.col:last-child { border-right: 0; }
.col.sel { background: #d2d2d2; color: #217346; border-bottom: 2px solid #217346; }
.sheet-body { flex: 1; min-height: 0; display: flex; position: relative; overflow: hidden; border-right: 2px solid #a6a6a6; }
.sheet-body::after { content: ""; position: absolute; left: 34px; right: 0; bottom: 0; height: 1px; background: linear-gradient(to right, #a0a0a0 67px, transparent 67px, transparent 137px, #a0a0a0 137px); }
.row-heads { width: 34px; flex: none; box-sizing: border-box; background: #e6e6e6; border-right: 1px solid #9c9c9c; }
.rh { height: 23px; box-sizing: border-box; border-bottom: 1px solid #c0c0c0; display: flex; align-items: center; justify-content: center; font-size: 15px; }
.rh.first { height: 36px; }
.cells { flex: 1; min-width: 0; }
.title { height: 36px; padding-left: 26px; font-size: 26px; font-weight: 700; line-height: 36px; white-space: nowrap; }
.tbl { margin-top: 68px; }
.tr { display: flex; height: 23px; }
.td { box-sizing: border-box; height: 100%; border-right: 1px solid #000; border-bottom: 1px solid #000; padding: 0 3px; display: flex; align-items: center; white-space: nowrap; flex: none; }
.c-a { width: 74px; }
.c-b { width: 252px; }
.c-c { width: 66px; }
.td.r { justify-content: flex-end; }
.td.ctr { justify-content: center; padding: 0; }
.tr.head { height: 24px; }
.tr.head .td { background: #ffffcc; border-top: 1px solid #000; }
.td.inp { background: #ffcc99; color: #3f3f76; border-right: 1px solid #7f7f7f; border-bottom: 1px solid #7f7f7f; justify-content: flex-end; position: relative; }
.td.inp::after { content: ""; position: absolute; top: 0; right: 0; width: 0; height: 0; border-top: 5px solid #f00; border-left: 5px solid transparent; }

.chart { position: absolute; left: 624px; top: 37px; margin: 0; width: 837px; height: 732px; background: radial-gradient(ellipse at 50% 55%, #525252 0%, #4a4a4a 40%, #3a3a3a 75%, #2a2a2a 100%); }
.cat { font-family: Lato, sans-serif; font-size: 25px; fill: #d9d9d9; }
.val { font-family: Lato, sans-serif; font-size: 28px; font-weight: 700; fill: #000; }

.vscroll { flex: 1; background: #e6e6e6; display: flex; flex-direction: column; align-items: center; padding-top: 2px; box-sizing: border-box; }
.vbtn { width: 15px; height: 14px; box-sizing: border-box; background: #fff; border: 1px solid #ababab; display: flex; align-items: center; justify-content: center; flex: none; }
.thumb { width: 15px; height: 642px; margin-top: 1px; box-sizing: border-box; background: #fff; border: 1px solid #ababab; flex: none; }
.track { width: 15px; flex: 1; background: #dadada; }
</style>
